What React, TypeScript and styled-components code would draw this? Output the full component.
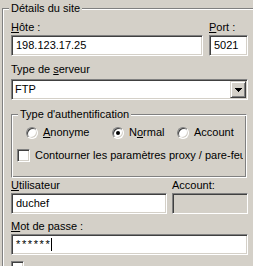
import styled, { createGlobalStyle } from 'styled-components';

const GlobalStyle = createGlobalStyle`
  html, body {
    margin: 0;
    padding: 0;
    background: #d4d0c8;
  }
  body {
    font-family: "Liberation Sans", Arial, sans-serif;
    font-size: 11px;
    color: #000;
  }
`;

const Page = styled.div`
  width: 253px;
  height: 266px;
  overflow: hidden;
  background: #d4d0c8;
`;

// etched group box (classic Windows look)
const GroupBox = styled.div<{ $width: number; $height?: number }>`
  position: relative;
  box-sizing: border-box;
  width: ${p => p.$width}px;
  height: ${p => (p.$height ? `${p.$height}px` : 'auto')};
  border: 1px solid;
  border-color: #808080 #fff #fff #808080;
  box-shadow: inset 1px 1px #fff, inset -1px -1px #808080;
`;

const OuterBox = styled(GroupBox)`
  margin: 8px 0 0 2px;
  padding: 12px 0 20px 8px;
`;

const Legend = styled.span`
  position: absolute;
  top: -7px;
  left: 6px;
  padding: 0 2px;
  line-height: 13px;
  background: #d4d0c8;
  white-space: nowrap;
`;

const Column = styled.div`
  width: 237px;
  display: flex;
  flex-direction: column;
`;

const Row = styled.div<{ $gap: number; $top?: number }>`
  display: flex;
  gap: ${p => p.$gap}px;
  margin-top: ${p => p.$top ?? 0}px;
`;

const Field = styled.div<{ $width: number }>`
  width: ${p => p.$width}px;
  display: flex;
  flex-direction: column;
`;

const Label = styled.div<{ $top?: number }>`
  height: 13px;
  line-height: 13px;
  margin-top: ${p => p.$top ?? 0}px;
  margin-bottom: 1px;
  white-space: nowrap;
  u {
    text-decoration: underline;
    text-underline-offset: 1px;
  }
`;

const Edit = styled.div<{ $disabled?: boolean }>`
  box-sizing: border-box;
  height: 21px;
  border: 1px solid;
  border-color: #808080 #fff #fff #808080;
  box-shadow: inset 1px 1px #404040, inset -1px -1px #d4d0c8;
  background: ${p => (p.$disabled ? '#d4d0c8' : '#fff')};
  padding: 0 4px;
  line-height: 19px;
  white-space: nowrap;
  overflow: hidden;
  display: flex;
  align-items: center;
`;

const Masked = styled.span`
  letter-spacing: 1.6px;
`;

const Caret = styled.span`
  display: inline-block;
  width: 1px;
  height: 13px;
  background: #000;
`;

const Combo = styled(Edit)`
  justify-content: space-between;
  margin-top: 2px;
  padding: 0 0 0 3px;
`;

const DropButton = styled.div`
  box-sizing: border-box;
  width: 16px;
  height: 17px;
  margin-right: 1px;
  border: 1px solid;
  border-color: #d4d0c8 #404040 #404040 #d4d0c8;
  box-shadow: inset 1px 1px #fff, inset -1px -1px #808080;
  background: #d4d0c8;
  display: flex;
  align-items: center;
  justify-content: center;
`;

const AuthBox = styled(GroupBox)`
  margin-top: 14px;
  padding: 11px 0 0 0;
`;

const RadioRow = styled.div`
  display: grid;
  grid-template-columns: 86px 65px auto;
  padding-left: 14px;
`;

const Option = styled.div`
  display: flex;
  align-items: flex-start;
  gap: 5px;
  line-height: 13px;
  white-space: nowrap;
`;

const RadioDot = styled.span<{ $checked?: boolean }>`
  box-sizing: border-box;
  position: relative;
  width: 12px;
  height: 12px;
  margin-top: 1px;
  border-radius: 50%;
  border: 1px solid;
  border-color: #808080 #fff #fff #808080;
  box-shadow: inset 1px 1px #404040, inset -1px -1px #d4d0c8;
  background: #fff;
  &::after {
    content: '';
    display: ${p => (p.$checked ? 'block' : 'none')};
    position: absolute;
    left: 3px;
    top: 3px;
    width: 4px;
    height: 4px;
    border-radius: 50%;
    background: #000;
  }
`;

const CheckRow = styled.div`
  width: 226px;
  margin: 10px 0 0 5px;
  overflow: hidden;
`;

const CheckBox = styled.span`
  box-sizing: border-box;
  display: block;
  flex: none;
  width: 13px;
  height: 13px;
  border: 1px solid;
  border-color: #808080 #fff #fff #808080;
  box-shadow: inset 1px 1px #404040, inset -1px -1px #d4d0c8;
  background: #fff;
`;

const BottomCheck = styled.div`
  margin-top: 6px;
`;

const Arrow = () => (
  <svg width="7" height="4" viewBox="0 0 7 4" shapeRendering="crispEdges">
    <path d="M0 0h7v1H0z M1 1h5v1H1z M2 2h3v1H2z M3 3h1v1H3z" fill="#000" />
  </svg>
);

export default function App() {
  return (
    <Page>
      <GlobalStyle />
      <OuterBox $width={262}>
        <Legend>Détails du site</Legend>
        <Column>
          <Row $gap={6}>
            <Field $width={192}>
              <Label><u>H</u>ôte :</Label>
              <Edit>198.123.17.25</Edit>
            </Field>
            <Field $width={39}>
              <Label><u>P</u>ort :</Label>
              <Edit>5021</Edit>
            </Field>
          </Row>

          <Label $top={7}>Type de <u>s</u>erveur</Label>
          <Combo>
            FTP
            <DropButton><Arrow /></DropButton>
          </Combo>

          <AuthBox $width={236} $height={64}>
            <Legend>Type d'authentification</Legend>
            <RadioRow>
              <Option><RadioDot /><span><u>A</u>nonyme</span></Option>
              <Option><RadioDot $checked /><span>N<u>o</u>rmal</span></Option>
              <Option><RadioDot /><span>Account</span></Option>
            </RadioRow>
            <CheckRow>
              <Option>
                <CheckBox />
                <span>Contourner les paramètres proxy / pare-feu</span>
              </Option>
            </CheckRow>
          </AuthBox>

          <Row $gap={5} $top={1}>
            <Field $width={156}>
              <Label><u>U</u>tilisateur</Label>
              <Edit>duchef</Edit>
            </Field>
            <Field $width={76}>
              <Label>Account:</Label>
              <Edit $disabled />
            </Field>
          </Row>

          <Label $top={6}><u>M</u>ot de passe :</Label>
          <Edit><Masked>******</Masked><Caret /></Edit>

          <BottomCheck><CheckBox /></BottomCheck>
        </Column>
      </OuterBox>
    </Page>
  );
}
